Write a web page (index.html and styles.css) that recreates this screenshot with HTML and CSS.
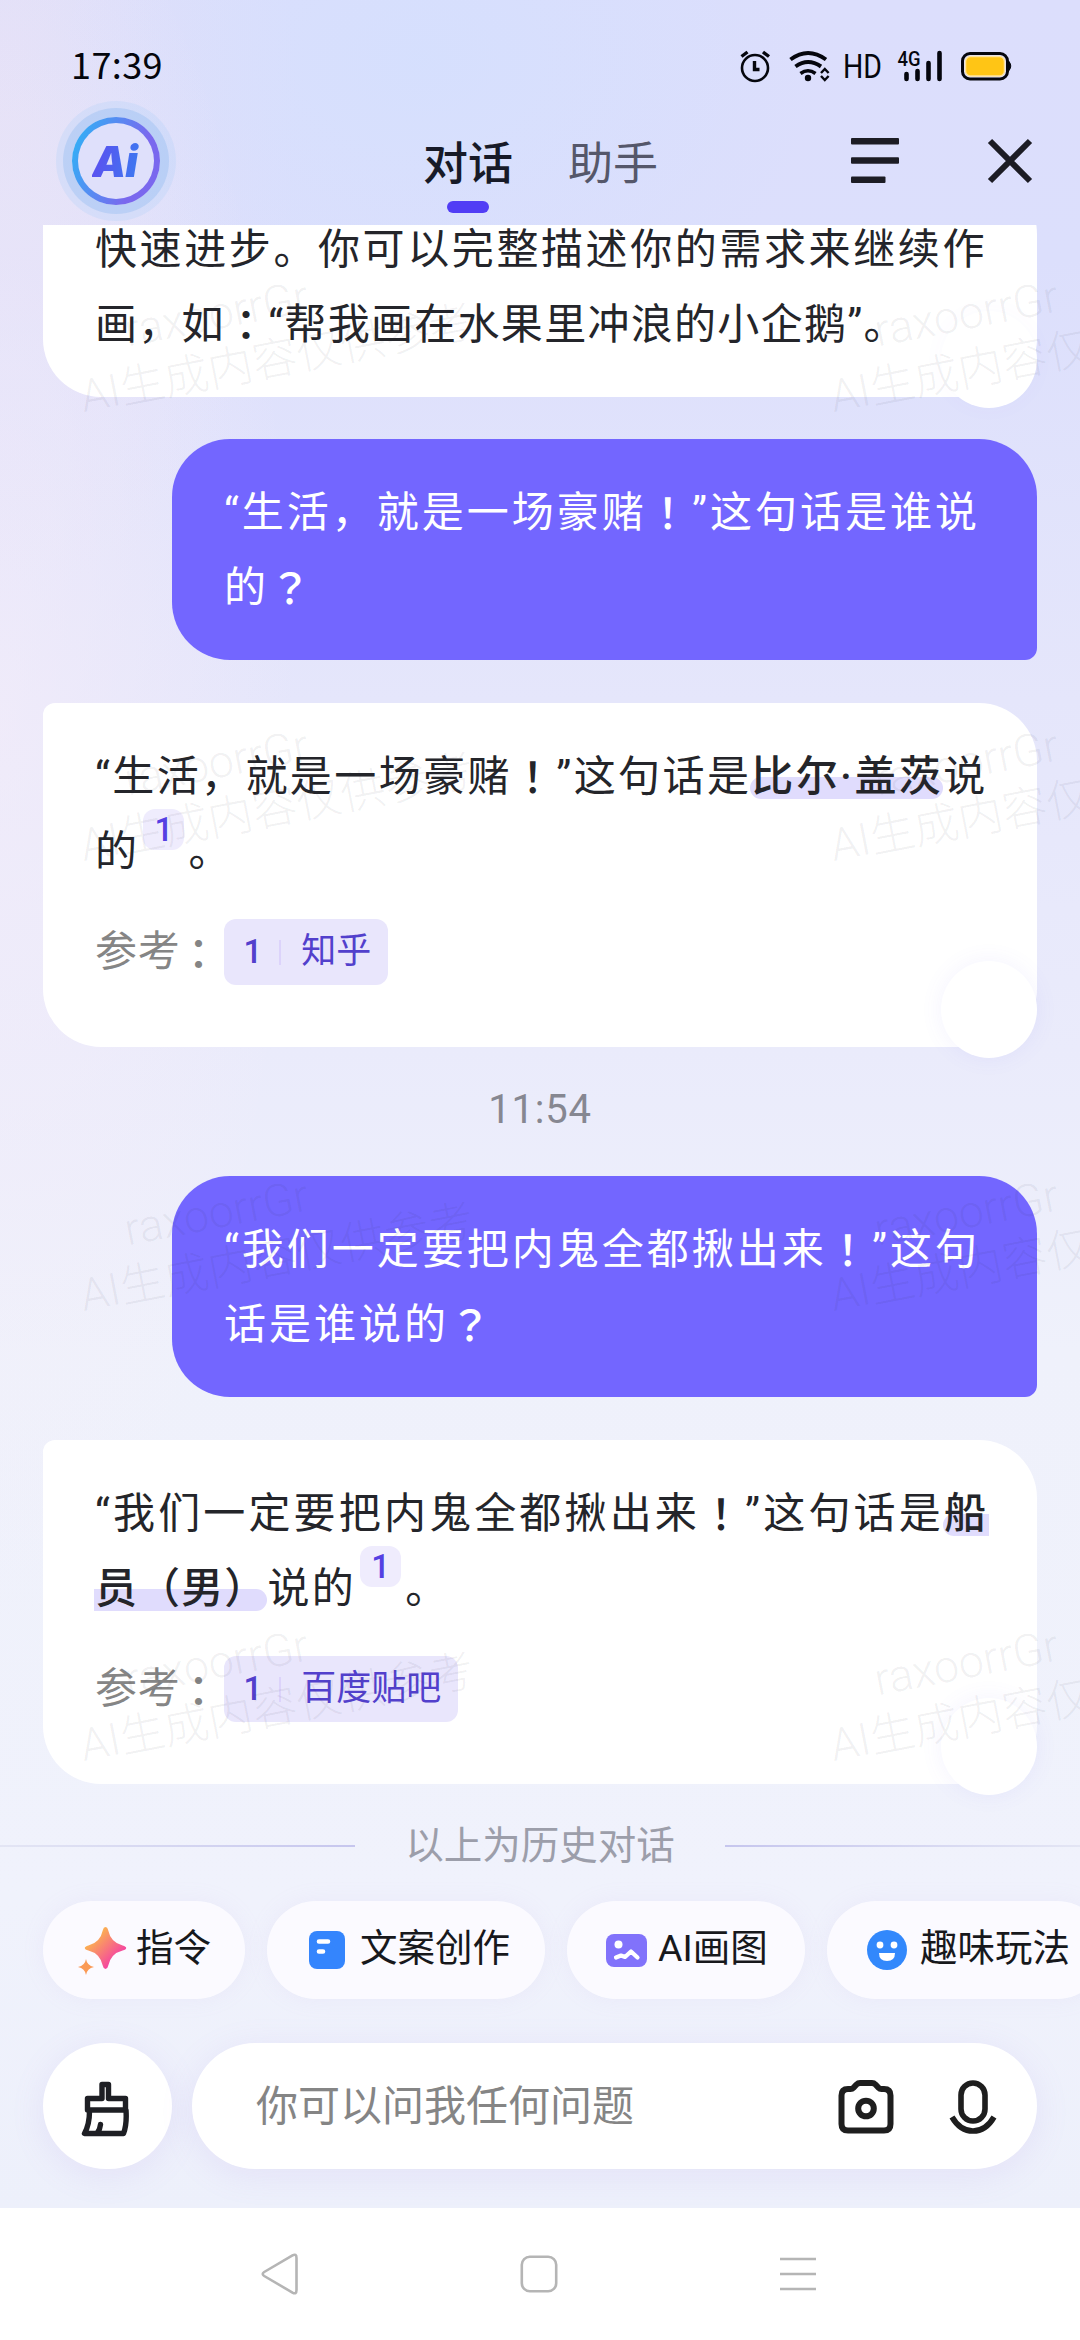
FILE: index.html
```html
<!DOCTYPE html>
<html lang="zh-CN">
<head>
<meta charset="utf-8">
<title>对话</title>
<link rel="stylesheet" href="styles.css">
</head>
<body>
<div class="app">
  <div class="status">
    <span class="clock">17:39</span>
    <svg class="status-icons" width="276" height="40" viewBox="738 46 276 40" fill="none" stroke="#05060d">
      <circle cx="755" cy="68" r="13" stroke-width="2.6"/>
      <path d="M754.500 61v8.500h5M741.500 56.500l6-4.500M769 56.500l-6-4.500" stroke-width="3.400"/>
      <path d="M790.500 59.500q17.500-13 35.500 0M795.500 66.500q12.500-9 25.500 0" stroke-width="4"/>
      <path d="M800.500 73.500q7.500-5.500 15 0" stroke-width="3.600"/>
      <circle cx="808" cy="78" r="3.200" fill="#05060d" stroke="none"/>
      <path d="M821 73l3.800-4 3.800 4M821 76l3.800 4 3.800-4" stroke-width="2.400"/>
      <text x="843" y="78" class="hd" textLength="39" lengthAdjust="spacingAndGlyphs">HD</text>
      <text x="897.500" y="66" class="net" textLength="23" lengthAdjust="spacingAndGlyphs">4G</text>
      <path d="M906.500 74v5M917.500 71v8M928.500 63v16M939.500 53v26" stroke-width="4.600" stroke-linecap="round"/>
      <rect x="962.500" y="53.500" width="45" height="25.500" rx="7.500" stroke-width="3"/>
      <rect x="965.500" y="56.500" width="39" height="19.500" rx="5" fill="#ffc515" stroke="#ffe39a" stroke-width="1.500"/>
      <path d="M1009 61.500q3.500 4.500 0 9z" fill="#05060d" stroke-width="1"/>
    </svg>
  </div>
  <div class="topbar">
    <div class="avatar"><span>Ai</span></div>
    <div class="tabs">
      <span class="tab active">对话</span>
      <span class="tab">助手</span>
    </div>
    <svg class="menu" width="48" height="46" viewBox="0 0 48 46" fill="#1c1c24">
      <rect x="0" y="0" width="48" height="6.500" rx="1"/><rect x="0" y="19.300" width="48" height="6.500" rx="1"/><rect x="0" y="38.600" width="34.500" height="6.500" rx="1"/>
    </svg>
    <svg class="close" width="46" height="46" viewBox="0 0 46 46" stroke="#1c1c24" stroke-width="6"><path d="M3 3l40 40M43 3L3 43"/></svg>
  </div>

  <div class="chat">
    <div class="bubble bot first">
      <div class="line ls26">快速进步。你可以完整描述你的需求来继续作</div>
      <div class="line ls13">画，如<i>：</i>“帮我画在水果里冲浪的小企鹅”。</div>
      <b class="knob"></b>
    </div>
    <div class="bubble user">
      <div class="line">“生活，就是一场豪赌<i>！</i>”这句话是谁说</div>
      <div class="line">的<i>？</i></div>
    </div>
    <div class="bubble bot">
      <div class="line ls24">“生活，就是一场豪赌<i>！</i>”这句话是<strong class="start end">比尔·盖茨</strong>说</div>
      <div class="line ls24">的<span class="cite">1</span>。</div>
      <div class="refs">参考<i>：</i><span class="ref"><b>1</b><u></u>知乎</span></div>
      <b class="knob"></b>
    </div>
    <div class="time">11:54</div>
    <div class="bubble user">
      <div class="line">“我们一定要把内鬼全都揪出来<i>！</i>”这句</div>
      <div class="line">话是谁说的<i>？</i></div>
    </div>
    <div class="bubble bot">
      <div class="line ls31">“我们一定要把内鬼全都揪出来<i>！</i>”这句话是<strong class="start">船</strong></div>
      <div class="line ls24"><strong class="end ls11">员（男）</strong>说的<span class="cite">1</span>。</div>
      <div class="refs">参考<i>：</i><span class="ref"><b>1</b><u></u>百度贴吧</span></div>
      <b class="knob"></b>
    </div>
    <div class="history"><span class="rule"></span>以上为历史对话<span class="rule right"></span></div>
  </div>

  <div class="chips">
    <div class="chip c1">
      <svg width="50" height="50" viewBox="0 0 50 50">
        <defs><linearGradient id="spark" x1="0" y1="0" x2="1" y2="1"><stop offset=".25" stop-color="#fbae52"/><stop offset=".75" stop-color="#f5479f"/></linearGradient></defs>
        <path d="M27.500 2q2 0 2.600 3 2.600 12.500 14.500 15.500 3.600 1 3.600 2.500t-3.600 2.500Q32.700 28.500 30.100 41q-.6 3-2.600 3t-2.600-3Q22.300 28.500 10.400 25.500 6.800 24.500 6.800 23t3.600-2.500Q22.300 17.500 24.900 5q.6-3 2.600-3z" fill="url(#spark)"/>
        <path d="M8 34q1 6.500 8 8-7 1.500-8 8-1-6.500-8-8 7-1.500 8-8z" fill="#fa9a55"/>
      </svg><span>指令</span>
    </div>
    <div class="chip c2">
      <svg width="36" height="38" viewBox="0 0 36 38"><rect width="36" height="38" rx="8" fill="#3485fd"/><path d="M10 10.500h9M10 20.500h4" stroke="#fff" stroke-width="4.600" stroke-linecap="round"/></svg><span>文案创作</span>
    </div>
    <div class="chip c3">
      <svg width="41" height="33" viewBox="0 0 41 33"><rect width="41" height="33" rx="8" fill="#8172fb"/><circle cx="12.500" cy="10.500" r="4" fill="#fff"/><path d="M10 23.500l5-2 4 1.500 6-5.500 6.500 6" fill="none" stroke="#fff" stroke-width="4.200" stroke-linecap="round" stroke-linejoin="round"/></svg><span>AI画图</span>
    </div>
    <div class="chip c4">
      <svg width="40" height="40" viewBox="0 0 40 40"><circle cx="20" cy="20" r="20" fill="#3288fc"/><g fill="#fff"><circle cx="13" cy="15" r="3.400"/><circle cx="27" cy="15" r="3.400"/><path d="M12 23h16q0 8-8 8t-8-8z"/></g></svg><span>趣味玩法</span>
    </div>
  </div>

  <div class="composer">
    <div class="brush">
      <svg width="48" height="56" viewBox="0 0 48 56" fill="none" stroke="#1e1f24" stroke-width="5.400" stroke-linejoin="round" stroke-linecap="round">
        <path d="M21 3.500h6.500v14h17v11.500h-38V17.500H21zM8.500 29q.2 14-5 23.500h39q3.500-9 2.500-23.500M19.500 43.500q-.5 5-3 8"/>
      </svg>
    </div>
    <div class="input">
      <span>你可以问我任何问题</span>
      <svg class="camera" width="56" height="54" viewBox="0 0 56 54" fill="none" stroke="#1e1e1e" stroke-width="6">
        <path d="M18.500 4.500q1.500-1.500 3.500-1.500h12q2 0 3.500 1.500l3 3.200q1.200 1.300 3 1.300H46q6.500 0 6.500 6.500V44q0 6.500-6.500 6.500H10q-6.500 0-6.500-6.500V15.500Q3.500 9 10 9h2.500q1.800 0 3-1.300z"/><circle cx="28" cy="28.500" r="7.800"/>
      </svg>
      <svg class="mic" width="48" height="54" viewBox="0 0 48 54" fill="none" stroke="#1e1e1e" stroke-width="5.600">
        <rect x="12" y="3" width="24" height="38" rx="12"/><path d="M3 37q8 14 21 14t21-14"/>
      </svg>
    </div>
  </div>

  <div class="sysnav">
    <svg width="38" height="42" viewBox="0 0 38 42" fill="none" stroke="#b5b5b5" stroke-width="2.600" stroke-linejoin="round"><path d="M31.500 2.400Q35.500.2 35.500 5v32q0 4.800-4 2.600L3.200 23q-3-2 0-4z"/></svg>
    <svg width="38" height="42" viewBox="0 0 38 42" fill="none" stroke="#b5b5b5" stroke-width="2.600"><rect x="1.800" y="3.800" width="34.400" height="34.400" rx="8"/></svg>
    <svg width="38" height="42" viewBox="0 0 38 42" stroke="#b5b5b5" stroke-width="2.600"><path d="M1 6h36M1 21h36M1 36h36"/></svg>
  </div>

  <div class="marks">
    <div class="mark m1"><span>raxoorrGr</span>AI生成内容仅供参考</div>
    <div class="mark m1 far"><span>raxoorrGr</span>AI生成内容仅</div>
    <div class="mark m2"><span>raxoorrGr</span>AI生成内容仅供参考</div>
    <div class="mark m2 far"><span>raxoorrGr</span>AI生成内容仅</div>
    <div class="mark m3"><span>raxoorrGr</span>AI生成内容仅供参考</div>
    <div class="mark m3 far"><span>raxoorrGr</span>AI生成内容仅</div>
    <div class="mark m4"><span>raxoorrGr</span>AI生成内容仅供参考</div>
    <div class="mark m4 far"><span>raxoorrGr</span>AI生成内容仅</div>
  </div>
</div>
</body>
</html>
```
FILE: styles.css
```css
* { box-sizing: border-box; }
body { margin: 0; font-family: Roboto, "Noto Sans CJK SC", sans-serif; color: #24252a; }
i { font-style: normal; font-weight: 500; font-family: "Noto Sans CJK JP", sans-serif; }
svg { display: block; flex: none; }

.app {
  position: relative;
  width: 1080px;
  height: 2340px;
  overflow: hidden;
  display: flex;
  flex-direction: column;
  background:
    radial-gradient(ellipse 300px 900px at 0 720px, rgba(246, 238, 249, .6), rgba(246, 238, 249, 0)),
    radial-gradient(ellipse 400px 300px at 420px 60px, rgba(211, 224, 254, .7), rgba(211, 224, 254, 0)),
    radial-gradient(ellipse 300px 500px at 0 100px, rgba(230, 224, 245, .7), rgba(230, 224, 245, 0)),
    linear-gradient(180deg, #dcdefc 0, #dcdffc 260px, #e5e6fb 700px, #eaebfb 1050px, #eff1fb 1350px, #f0f2fc 1900px, #edf0fb 2208px);
}

.status { height: 92px; padding: 46px 66px 0 71px; display: flex; justify-content: space-between; }
.clock { margin-top: -3px; font-family: "Noto Sans CJK SC", sans-serif; font-size: 36px; line-height: 40px; color: #05060d; letter-spacing: .4px; }
.hd, .net { fill: #05060d; stroke: none; font-family: Roboto, sans-serif; }
.hd { font-size: 34px; }
.net { font-size: 21px; font-weight: 500; }

.topbar { height: 133px; display: flex; align-items: flex-start; }
.avatar {
  width: 88px; height: 88px; margin: 25px 0 0 72px; border-radius: 50%;
  border: 6px solid transparent;
  background: linear-gradient(#dfe0fb, #dfe0fb) padding-box, linear-gradient(110deg, #2fb2f6 5%, #7a68ee 70%) border-box;
  box-shadow: 0 0 0 9px rgba(130, 180, 240, .3), 0 0 0 16px rgba(180, 210, 250, .3);
  display: flex; align-items: center; justify-content: center;
}
.avatar span {
  font: italic 900 43px/50px Inter, sans-serif; letter-spacing: -1px; padding-right: 3px;
  color: transparent; background: linear-gradient(100deg, #5e4cf0, #3b7cf0); -webkit-background-clip: text; background-clip: text;
}
.tabs { display: flex; gap: 55px; margin: 36px 0 0 263px; }
.tab { position: relative; font-size: 45px; line-height: 66px; color: #55576a; font-family: "Noto Sans CJK SC", sans-serif; }
.active { color: #171a28; font-weight: 500; }
.active::after { content: ""; position: absolute; left: 24px; top: 73px; width: 42px; height: 12px; border-radius: 6px; background: #513df5; }
.menu { margin: 46px 0 0 193px; }
.close { margin: 46px 0 0 88px; }

.chat { height: 1655px; overflow: hidden; padding: 0 43px; display: flex; flex-direction: column; }
.bubble { position: relative; flex: none; padding: 36px 0 0 52px; border-radius: 58px; font-size: 42px; }
.bot { background: #fff; height: 344px; margin-top: 43px; border-top-left-radius: 12px; }
.first { height: 221px; margin-top: -49px; }
.user { background: #7366ff; color: #fff; width: 865px; height: 221px; margin: 42px 0 0 129px; border-bottom-right-radius: 12px; }
.line { height: 75px; display: flex; align-items: center; white-space: nowrap; line-height: 75px; letter-spacing: 3px; }
.line i { margin-bottom: 5px; }
.ls31 { letter-spacing: 3.15px; }
.ls26 { letter-spacing: 2.6px; }
.ls24 { letter-spacing: 2.4px; }
.ls13 { letter-spacing: 1.3px; }
.ls11 { letter-spacing: 1.1px; }
strong { position: relative; z-index: 0; font-weight: 500; }
strong::before { content: ""; position: absolute; z-index: -1; left: -1px; right: 0; bottom: 15px; height: 22px; background: #e0dcfd; }
.start::before { border-top-left-radius: 11px; border-bottom-left-radius: 11px; }
.end::before { border-top-right-radius: 11px; border-bottom-right-radius: 11px; }
.cite {
  width: 41px; height: 41px; margin: 0 4px 44px 4px; border-radius: 12px; background: #efecfd;
  color: #5540e2; font-size: 33px; font-weight: 500; line-height: 41px; text-align: center; letter-spacing: 0;
}
.knob { position: absolute; right: 0; bottom: -11px; width: 96px; height: 97px; border-radius: 50%; background: #fff; box-shadow: 0 0 22px rgba(115, 100, 240, .08); }
.first .knob { box-shadow: 0 0 22px rgba(115, 100, 240, .03); }
.refs { height: 66px; margin-top: 30px; display: flex; align-items: center; color: #858585; font-size: 42px; line-height: 66px; letter-spacing: .8px; }
.refs i { margin: 0 4px 0 -3px; }
.ref { height: 66px; padding: 0 17px 0 19px; border-radius: 12px; background: #e9e6fc; color: #5240cc; font-size: 35px; display: flex; align-items: center; letter-spacing: 0; }
.ref b { font-weight: 500; font-size: 33px; }
.ref u { width: 2px; height: 25px; margin: 0 20px 0 17px; background: #dcd3fb; }
.time { flex: none; height: 87px; padding-top: 20px; font-size: 40px; line-height: 86px; text-align: center; color: #868791; letter-spacing: .8px; }
.history { height: 60px; margin: 32px -43px 0; display: flex; align-items: center; justify-content: space-between; color: #9c9eaa; font-size: 38.500px; line-height: 60px; }
.rule { width: 355px; height: 2px; background: linear-gradient(90deg, #e3e5f4, #c6c6ee); }
.right { transform: scaleX(-1); }

.chips { height: 99px; margin-top: 21px; padding-left: 43px; display: flex; gap: 22px; }
.chip { flex: none; height: 98px; border-radius: 49px; background: rgba(253, 252, 255, .85); box-shadow: 0 0 22px rgba(200, 170, 230, .1); display: flex; align-items: center; font-size: 37.500px; line-height: 98px; color: #17181c; white-space: nowrap; }
.chip span { margin-top: -4px; }
.c1 { width: 202px; padding-left: 35px; gap: 8px; }
.c2 { width: 278px; padding-left: 42px; gap: 15px; }
.c3 { width: 238px; padding-left: 39px; gap: 11px; }
.c4 { width: 279px; padding-left: 40px; gap: 13px; }
.composer { height: 208px; padding: 43px 43px 0; display: flex; gap: 20px; }
.brush, .input { height: 126px; border-radius: 63px; background: #fff; box-shadow: 0 6px 34px rgba(160, 120, 225, .12); display: flex; align-items: center; }
.brush { width: 129px; padding: 5px 0 0 38px; }
.input { flex: 1; padding: 1px 0 0 64px; color: #858585; font-size: 42px; line-height: 126px; }
.input span { flex: 1; }
.camera { margin-right: 55px; }
.mic { margin-right: 40px; }

.sysnav { height: 132px; padding: 0 263px 0 261px; background: #fff; display: flex; justify-content: space-between; align-items: center; }

.marks { position: absolute; inset: 225px 0 460px; overflow: hidden; pointer-events: none; }
.mark { position: absolute; left: 86px; font-size: 45px; line-height: 56px; font-weight: 300; white-space: nowrap; color: rgba(50, 50, 75, .07); transform: rotate(-11deg); transform-origin: 0 100%; }
.mark span { display: block; padding-left: 56px; }
.far { left: 836px; }
.m1 { top: 88px; }
.m2 { top: 537px; }
.m3 { top: 987px; }
.m4 { top: 1437px; }
```
